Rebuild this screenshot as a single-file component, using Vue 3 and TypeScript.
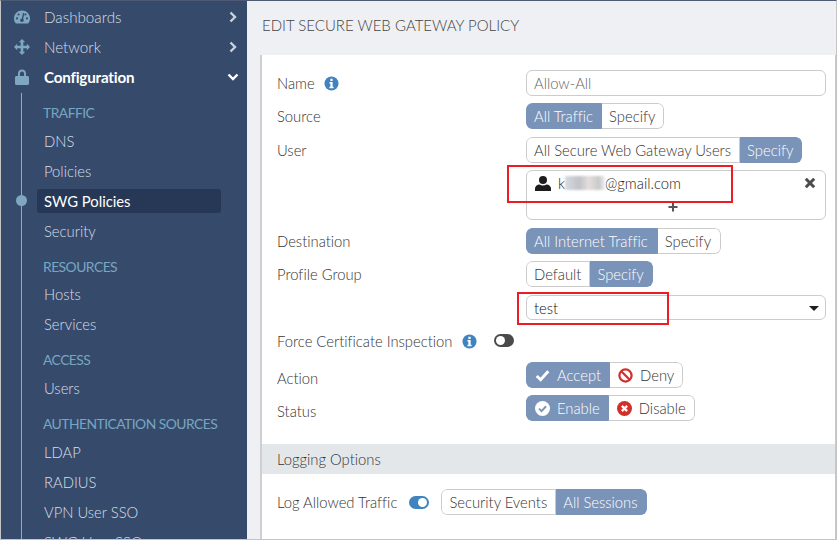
<script setup lang="ts">
interface NavItem { label: string; kind: 'head' | 'link' | 'active' }
const items: NavItem[] = [
  { label: 'TRAFFIC', kind: 'head' },
  { label: 'DNS', kind: 'link' },
  { label: 'Policies', kind: 'link' },
  { label: 'SWG Policies', kind: 'active' },
  { label: 'Security', kind: 'link' },
  { label: 'RESOURCES', kind: 'head' },
  { label: 'Hosts', kind: 'link' },
  { label: 'Services', kind: 'link' },
  { label: 'ACCESS', kind: 'head' },
  { label: 'Users', kind: 'link' },
  { label: 'AUTHENTICATION SOURCES', kind: 'head' },
  { label: 'LDAP', kind: 'link' },
  { label: 'RADIUS', kind: 'link' },
  { label: 'VPN User SSO', kind: 'link' },
  { label: 'SWG User SSO', kind: 'link' }
]
</script>

<template>
  <div class="frame">
    <aside class="sidebar">
      <div class="top">
        <svg class="top-icon" viewBox="0 0 16 14"><path fill="#7fa7c0" fill-rule="evenodd" d="M8 0.5C3.6 0.5 0 4 0 8.4c0 1.7.5 3.3 1.4 4.6.2.3.5.4.8.4h11.6c.3 0 .6-.1.8-.4.9-1.3 1.4-2.9 1.4-4.6C16 4 12.400.5 8 .5zM3 9.500a1.100 1.100 0 1 1 0-2.200 1.100 1.100 0 0 1 0 2.200zM4.600 5.600a1.100 1.100 0 1 1 0-2.200 1.100 1.100 0 0 1 0 2.200zM10.200 3.700l-1 5.200c.4.400.6.800.6 1.300 0 1-.8 1.700-1.800 1.700s-1.800-.7-1.800-1.700c0-.9.700-1.700 1.700-1.700l1-5c.1-.3.300-.500.700-.400.300.1.500.300.600.600zM11.400 5.600a1.100 1.100 0 1 1 0-2.200 1.100 1.100 0 0 1 0 2.200zM13 9.500a1.100 1.100 0 1 1 0-2.200 1.100 1.100 0 0 1 0 2.200z"/></svg>
        <span class="top-label">Dashboards</span>
        <svg class="chev" viewBox="0 0 8 12"><path d="M1.500 1.500 6 6l-4.500 4.500" fill="none" stroke="#c9d1dc" stroke-width="2.400"/></svg>
      </div>
      <div class="top">
        <svg class="top-icon" viewBox="0 0 16 16"><path fill="#7fa7c0" d="M8 0l3.200 3.200H9.300v3.500h3.500V4.800L16 8l-3.200 3.200V9.300H9.300v3.500h1.900L8 16l-3.200-3.200h1.900V9.300H3.200v1.900L0 8l3.200-3.200v1.900h3.500V3.200H4.800z"/></svg>
        <span class="top-label">Network</span>
        <svg class="chev" viewBox="0 0 8 12"><path d="M1.500 1.500 6 6l-4.500 4.500" fill="none" stroke="#c9d1dc" stroke-width="2.400"/></svg>
      </div>
      <div class="top open">
        <svg class="top-icon lock" viewBox="0 0 14 16"><path fill="#7fa7c0" d="M3 7V4.500C3 2.100 4.800.5 7 .5s4 1.600 4 4V7h1.500c.8 0 1.500.6 1.500 1.400v6.100c0 .8-.7 1.500-1.500 1.500h-11C.7 16 0 15.300 0 14.500V8.400C0 7.600.7 7 1.500 7zm2 0h4V4.500C9 3.300 8.100 2.500 7 2.500s-2 .8-2 2z"/></svg>
        <span class="top-label">Configuration</span>
        <svg class="chev down" viewBox="0 0 12 8"><path d="M1.500 1.500 6 6l4.500-4.500" fill="none" stroke="#fff" stroke-width="2.400"/></svg>
      </div>
      <nav class="tree">
        <template v-for="it in items" :key="it.label">
          <div :class="['node', it.kind]"><span class="node-text">{{ it.label }}</span></div>
        </template>
        <span class="dot"></span>
      </nav>
    </aside>

    <main class="main">
      <h1 class="title">EDIT SECURE WEB GATEWAY POLICY</h1>
      <section class="card">
        <div class="form">
          <div class="row">
            <div class="label">Name
              <svg class="info" viewBox="0 0 16 16"><circle cx="8" cy="8" r="7.500" fill="#3f83c1"/><path fill="#fff" d="M6.800 3h2.400v2.200H6.800zM5.800 6.400h3.400v5.100h1v1.500H5.800v-1.500h1V7.900h-1z"/></svg>
            </div>
            <div class="control grow"><div class="input">Allow-All</div></div>
          </div>
          <div class="row gap7">
            <div class="label">Source</div>
            <div class="control"><div class="group"><span class="seg on">All Traffic</span><span class="seg">Specify</span></div></div>
          </div>
          <div class="row gap8">
            <div class="label">User</div>
            <div class="control"><div class="group"><span class="seg">All Secure Web Gateway Users</span><span class="seg on">Specify</span></div></div>
          </div>
          <div class="row gap7">
            <div class="label"></div>
            <div class="control grow">
              <div class="userbox">
                <div class="user-line">
                  <svg class="person" viewBox="0 0 16 15"><circle cx="8" cy="4" r="4" fill="#1d1d1d"/><path fill="#1d1d1d" d="M0 15v-2.500C0 10.200 2 8.500 4.500 8.500c1 .6 2.200 1 3.500 1s2.500-.4 3.500-1c2.500 0 4.500 1.700 4.500 4V15z"/></svg>
                  <span class="email">k<span class="blur"></span>@gmail.com</span>
                  <svg class="close" viewBox="0 0 12 12"><path d="M1.800 1.800l8.400 8.400M10.200 1.800l-8.400 8.400" stroke="#4c4c4c" stroke-width="3" fill="none"/></svg>
                </div>
                <svg class="plus" viewBox="0 0 10 10"><path d="M5 .5v9M.5 5h9" stroke="#555" stroke-width="2" fill="none"/></svg>
              </div>
            </div>
          </div>
          <div class="row gap8">
            <div class="label">Destination</div>
            <div class="control"><div class="group"><span class="seg on wide">All Internet Traffic</span><span class="seg wide">Specify</span></div></div>
          </div>
          <div class="row gap7">
            <div class="label">Profile Group</div>
            <div class="control"><div class="group"><span class="seg">Default</span><span class="seg on">Specify</span></div></div>
          </div>
          <div class="row gap8">
            <div class="label"></div>
            <div class="control grow"><div class="input select dark">test<span class="caret"></span></div></div>
          </div>
          <div class="row force">
            <div class="label">Force Certificate Inspection
              <svg class="info roomy" viewBox="0 0 16 16"><circle cx="8" cy="8" r="7.500" fill="#3f83c1"/><path fill="#fff" d="M6.800 3h2.400v2.200H6.800zM5.800 6.400h3.400v5.100h1v1.500H5.800v-1.500h1V7.900h-1z"/></svg>
              <span class="toggle off"><i></i></span>
            </div>
          </div>
          <div class="row action low">
            <div class="label">Action</div>
            <div class="control"><div class="group">
              <span class="seg on"><svg class="ic" viewBox="0 0 16 14"><path d="M1.800 7.500 6 11.500 14.200 2.500" fill="none" stroke="#fff" stroke-width="3.200"/></svg>Accept</span>
              <span class="seg"><svg class="ic" viewBox="0 0 16 16"><circle cx="8" cy="8" r="6.500" fill="none" stroke="#d32f2a" stroke-width="2.400"/><path d="M3.500 3.500l9 9" stroke="#d32f2a" stroke-width="2.400"/></svg>Deny</span>
            </div></div>
          </div>
          <div class="row gap7 low">
            <div class="label">Status</div>
            <div class="control"><div class="group">
              <span class="seg on"><svg class="ic" viewBox="0 0 16 16"><circle cx="8" cy="8" r="8" fill="#fff"/><path d="M4.300 8.200 7 10.800 11.800 5.600" fill="none" stroke="#7a93b8" stroke-width="2"/></svg>Enable</span>
              <span class="seg"><svg class="ic" viewBox="0 0 16 16"><circle cx="8" cy="8" r="8" fill="#d32f2a"/><path d="M5.200 5.200l5.600 5.600M10.800 5.200l-5.600 5.600" stroke="#fff" stroke-width="2.400"/></svg>Disable</span>
            </div></div>
          </div>
        </div>
        <div class="band">Logging Options</div>
        <div class="log">
          <div class="label-inline">Log Allowed Traffic</div>
          <span class="toggle on"><i></i></span>
          <div class="group"><span class="seg">Security Events</span><span class="seg on">All Sessions</span></div>
        </div>
      </section>
    </main>

    <div class="mark mark-a"></div>
    <div class="mark mark-b"></div>
  </div>
</template>

<style>
html, body { margin: 0; padding: 0; }
</style>

<style scoped>
.frame {
  position: relative;
  box-sizing: border-box;
  width: 837px;
  height: 540px;
  overflow: hidden;
  display: flex;
  background: #eff0f3;
  font-family: Lato, "Open Sans", sans-serif;
  font-size: 14.8px;
  font-weight: 300;
  font-variant-ligatures: no-common-ligatures;
  color: #3a3a3a;
  border-left: 1px solid #c4c4c4;
  border-right: 1px solid #c4c4c4;
  border-bottom: 1px solid #c4c4c4;
  border-top: 1px solid #4d5c74;
}
.sidebar {
  flex: 0 0 246px;
  background: #364b6c;
  color: #d8dee7;
  padding-top: 1px;
  overflow: hidden;
}
.top {
  height: 30px;
  display: flex;
  align-items: center;
  padding-left: 13px;
  box-sizing: border-box;
}
.top-icon { width: 16px; height: 16px; flex: none; }
.lock { width: 14px; margin-left: 1px; margin-right: 1px; }
.top-label { margin-left: 14px; flex: 1; font-size: 15.200px; }
.open .top-label { color: #fff; font-weight: 700; letter-spacing: -0.2px; }
.chev { width: 8px; height: 12px; margin-right: 10px; flex: none; }
.chev.down { width: 12px; height: 8px; margin-right: 8px; }
.tree {
  position: relative;
  margin-left: 20px;
  border-left: 1px solid #93aac0;
  margin-top: 1px;
  padding-top: 5px;
  padding-left: 15px;
}
.node {
  height: 30px;
  display: flex;
  align-items: center;
  width: 184px;
  box-sizing: border-box;
  padding-left: 7px;
  border-radius: 3px;
}
.node-text { white-space: nowrap; }
.head { color: #76a6c2; height: 28px; padding-left: 6px; margin-top: 6px; font-size: 13.900px; font-weight: 400; letter-spacing: -0.55px; }
.node.head:first-child { margin-top: 0; }
.node.head:nth-child(6) { height: 27px; padding-top: 1px; }
.active { background: #263856; color: #fff; font-weight: 400; height: 24px; margin-top: 3px; margin-bottom: 3px; }
.dot {
  position: absolute;
  left: -6px;
  top: 102px;
  width: 11px;
  height: 11px;
  border-radius: 50%;
  background: #7fa7c0;
}
.main { flex: 1; min-width: 0; padding-left: 15px; }
.title {
  margin: 0;
  height: 54px;
  box-sizing: border-box;
  padding-bottom: 6px;
  display: flex;
  align-items: center;
  font-size: 15px;
  font-weight: 300;
  color: #444;
}
.card {
  background: #fff;
  height: 500px;
  box-shadow: -2px 0 0 #cfcfcf;
  border-right: 1px solid #c8c8c8;
  box-sizing: border-box;
}
.form { padding: 15px 9px 0 15px; }
.row { display: flex; align-items: flex-start; }
.gap7 { margin-top: 7px; }
.gap8 { margin-top: 8px; }
.force { height: 26px; margin-top: 7px; }
.force .label { width: auto; }
.action { margin-top: 8px; }
.label {
  width: 249px;
  flex: none;
  height: 26px;
  display: flex;
  align-items: center;
  box-sizing: border-box;
  color: #333;
}
.low .label { padding-top: 6px; }
.info { width: 15px; height: 15px; margin-left: 9px; flex: none; }
.info.roomy { margin-left: 10px; }
.control { flex: 1; display: flex; }
.input {
  box-sizing: border-box;
  width: 300px;
  height: 26px;
  border: 1px solid #ccc;
  border-radius: 6px;
  padding-left: 7px;
  display: flex;
  align-items: center;
  color: #666;
  background: #fff;
}
.select { position: relative; height: 25px; padding-top: 1px; }
.dark { color: #111; }
.caret {
  position: absolute;
  right: 6px;
  top: 10px;
  border-left: 5px solid transparent;
  border-right: 5px solid transparent;
  border-top: 5px solid #1d1d1d;
}
.group {
  display: inline-flex;
  height: 26px;
  border-radius: 6px;
  overflow: hidden;
  box-sizing: border-box;
  flex: none;
}
.seg {
  display: inline-flex;
  align-items: center;
  padding: 0 8px 0 7px;
  background: #fff;
  border: 1px solid #ccc;
  border-left-width: 0;
  color: #333;
  white-space: nowrap;
}
.seg.wide { padding-right: 9px; }
.seg:first-child { border-left-width: 1px; border-radius: 6px 0 0 6px; }
.seg:last-child { border-radius: 0 6px 6px 0; }
.seg.on { background: #7a93b8; border-color: #7a93b8; color: #fff; }
.ic { width: 15px; height: 15px; margin-right: 7px; margin-left: 1px; flex: none; }
.userbox {
  box-sizing: border-box;
  width: 300px;
  height: 50px;
  border: 1px solid #ccc;
  border-radius: 6px;
  padding: 4px 8px 0;
  position: relative;
}
.user-line { display: flex; align-items: center; height: 16px; }
.person { width: 16px; height: 15px; flex: none; }
.email { margin-left: 7px; flex: 1; color: #222; white-space: nowrap; display: inline-flex; align-items: center; }
.blur {
  display: inline-block;
  width: 40px;
  height: 14px;
  background: linear-gradient(90deg, #d8dbe0, #bfc2c6 35%, #e6dede 60%, #c8c8c8 85%, #f2f2f2);
  filter: blur(1px);
}
.close { width: 12px; height: 12px; margin-right: 1px; flex: none; }
.plus { display: block; width: 10px; height: 10px; margin: 11px 0 0 133px; }
.toggle {
  display: inline-block;
  box-sizing: border-box;
  width: 20px;
  height: 13px;
  border-radius: 7px;
  position: relative;
  flex: none;
}
.toggle i {
  position: absolute;
  top: 2px;
  width: 9px;
  height: 9px;
  border-radius: 50%;
  background: #fff;
}
.toggle.off { background: #4a4a4a; margin-left: 17px; margin-top: -2px; }
.toggle.off i { left: 2px; }
.toggle.on { background: #3f83c1; margin-left: 12px; }
.toggle.on i { right: 2px; }
.band {
  margin-top: 23px;
  height: 30px;
  display: flex;
  align-items: center;
  padding-left: 15px;
  background: #e4e7ea;
  color: #333;
}
.log { display: flex; align-items: center; padding: 15px 0 0 15px; height: 26px; }
.label-inline { color: #333; }
.log .group { margin-left: 12px; }
.mark { position: absolute; box-sizing: border-box; border: 2px solid #ed1c24; pointer-events: none; }
.mark-a { left: 506px; top: 164px; width: 226px; height: 38px; }
.mark-b { left: 516px; top: 291px; width: 152px; height: 33px; }
</style>
